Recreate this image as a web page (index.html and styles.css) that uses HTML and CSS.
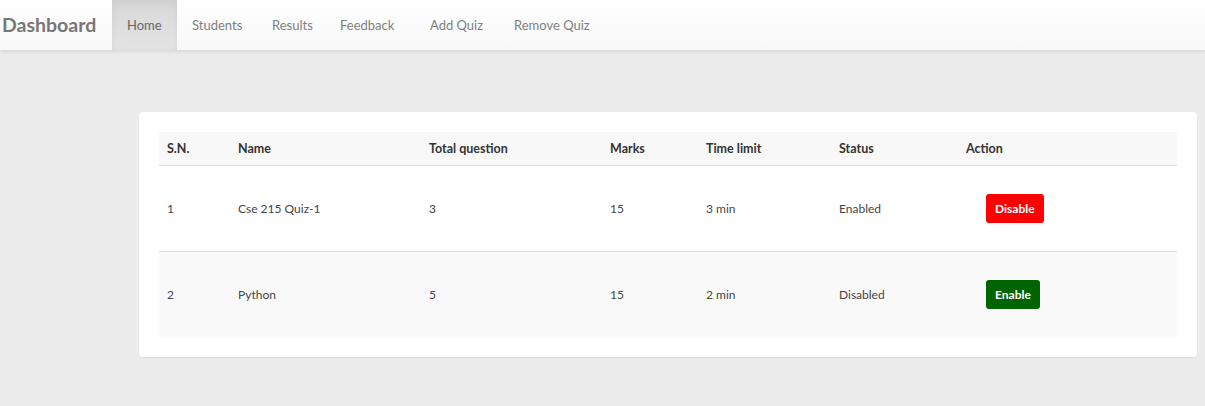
FILE: index.html
```html
<!DOCTYPE html>
<html>
<head>
<meta charset="utf-8">
<link rel="stylesheet" href="styles.css">
</head>
<body>
<nav class="navbar">
  <a class="brand">Dashboard</a>
  <ul class="nav">
    <li class="active"><a>Home</a></li>
    <li><a>Students</a></li>
    <li><a>Results</a></li>
    <li><a>Feedback</a></li>
    <li><a>Add Quiz</a></li>
    <li><a>Remove Quiz</a></li>
  </ul>
</nav>
<main class="main">
  <div class="card">
    <table class="quiz-table">
      <colgroup>
        <col class="c1"><col class="c2"><col class="c3"><col class="c4"><col class="c5"><col class="c6"><col>
      </colgroup>
      <thead>
        <tr><th>S.N.</th><th>Name</th><th>Total question</th><th>Marks</th><th>Time limit</th><th>Status</th><th>Action</th></tr>
      </thead>
      <tbody>
        <tr><td>1</td><td>Cse 215 Quiz-1</td><td>3</td><td>15</td><td>3 min</td><td>Enabled</td><td><span class="btn btn-red">Disable</span></td></tr>
        <tr class="alt"><td>2</td><td>Python</td><td>5</td><td>15</td><td>2 min</td><td>Disabled</td><td><span class="btn btn-green">Enable</span></td></tr>
      </tbody>
    </table>
  </div>
</main>
</body>
</html>
```
FILE: styles.css
```css
* { box-sizing: border-box; }
html, body { margin: 0; padding: 0; }
body {
  background: #ececec;
  font-family: "Lato", "DejaVu Sans", sans-serif;
  color: #333;
  height: 406px;
  overflow: hidden;
}
.navbar {
  display: flex;
  align-items: stretch;
  height: 50px;
  background: linear-gradient(to bottom, #ffffff 0%, #f8f8f8 100%);
  box-shadow: 0 1px 5px rgba(0,0,0,0.12);
  position: relative;
}
.brand {
  font-weight: bold;
  font-size: 19.5px;
  color: #777;
  padding-left: 2px;
  width: 112px;
  line-height: 50px;
}
.nav {
  list-style: none;
  margin: 0;
  padding: 0;
  display: flex;
}
.nav li a {
  display: block;
  padding: 0 15px;
  line-height: 50px;
  font-size: 13px;
  color: #808080;
}
.nav li.active a {
  background: linear-gradient(to bottom, #d8d8d8 0%, #e4e4e4 100%);
  box-shadow: inset 0 3px 9px rgba(0,0,0,0.06);
  color: #666;
}
.nav li:nth-child(1) a { width: 65px; }
.nav li:nth-child(2) a { width: 80px; }
.nav li:nth-child(3) a { width: 68px; }
.nav li:nth-child(4) a { width: 90px; }
.nav li:nth-child(5) a { width: 84px; }
.main {
  padding: 62px 8px 0 139px;
}
.card {
  background: #fff;
  border-radius: 4px;
  box-shadow: 0 1px 2px rgba(0,0,0,0.06);
  padding: 20px;
  height: 245px;
}
.quiz-table {
  width: 100%;
  border-collapse: collapse;
  table-layout: fixed;
  font-size: 12px;
}
.c1 { width: 71px; }
.c2 { width: 191px; }
.c3 { width: 181px; }
.c4 { width: 96px; }
.c5 { width: 133px; }
.c6 { width: 127px; }
.quiz-table th {
  text-align: left;
  font-weight: bold;
  background: #f8f8f8;
  height: 33px;
  padding: 0 8px;
  border-bottom: 1px solid #ddd;
  color: #333;
  font-size: 12.5px;
}
.quiz-table td {
  height: 86px;
  padding: 0 8px;
  color: #444;
  vertical-align: middle;
}
.quiz-table tbody tr + tr td { border-top: 1px solid #ddd; }
.quiz-table tr.alt td { background: #f9f9f9; }
.btn {
  display: inline-block;
  margin-left: 20px;
  color: #fff;
  font-weight: bold;
  font-size: 12px;
  line-height: 29px;
  padding: 0 9px;
  border-radius: 3px;
}
.btn-red { background: #ff0000; }
.btn-green { background: #006400; }
```
